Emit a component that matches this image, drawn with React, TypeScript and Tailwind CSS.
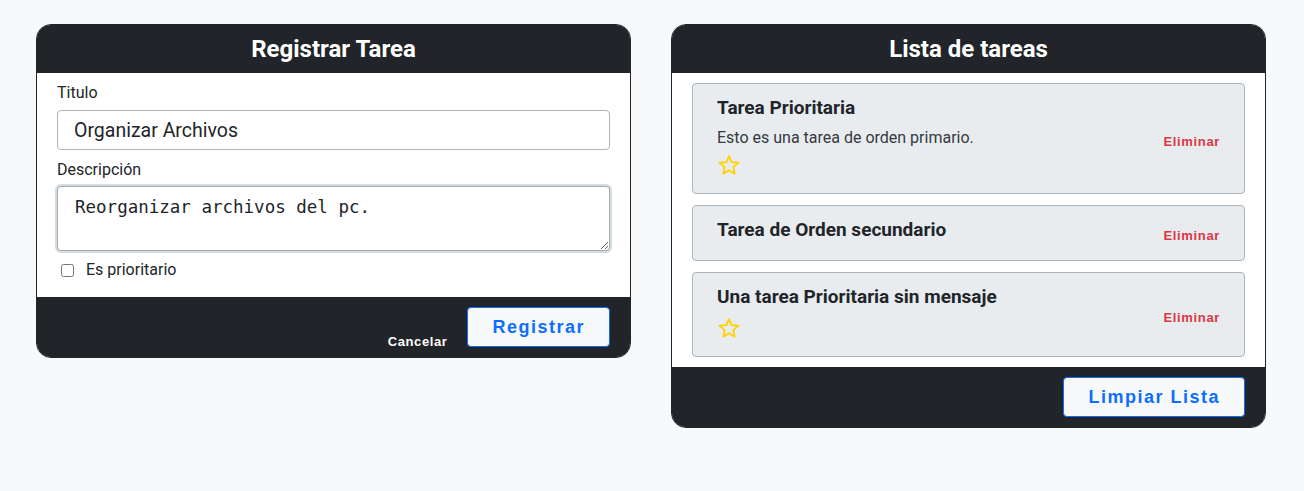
import { useState } from 'react'

type Task = {
  id: number
  title: string
  description?: string
  priority: boolean
}

const initialTasks: Task[] = [
  { id: 1, title: 'Tarea Prioritaria', description: 'Esto es una tarea de orden primario.', priority: true },
  { id: 2, title: 'Tarea de Orden secundario', priority: false },
  { id: 3, title: 'Una tarea Prioritaria sin mensaje', priority: true },
]

function StarIcon() {
  return (
    <svg width="22" height="20" viewBox="0 0 24 22" fill="none" className="block">
      <polygon
        points="12,1.3 14.9,7.9 22.3,8.5 16.7,13.3 18.3,20.5 12,16.7 5.7,20.5 7.3,13.3 1.7,8.5 9.1,7.9"
        stroke="#ffd100"
        strokeWidth="2"
        strokeLinejoin="round"
      />
    </svg>
  )
}

export default function App() {
  const [title, setTitle] = useState('Organizar Archivos')
  const [description, setDescription] = useState('Reorganizar archivos del pc.')
  const [priority, setPriority] = useState(false)
  const [tasks, setTasks] = useState<Task[]>(initialTasks)

  return (
    <div className="min-h-screen bg-[#f8f9fa] font-['Roboto','Liberation_Sans',sans-serif] text-[#212529]">
      <div className="flex items-start gap-[40px] pl-[36px] pt-[24px]">
        {/* Registrar Tarea */}
        <div className="w-[595px] overflow-hidden rounded-[15px] border border-[#212529] bg-white">
          <div className="flex h-[48px] items-center justify-center bg-[#212529]">
            <h2 className="text-[24px] font-bold text-white">Registrar Tarea</h2>
          </div>
          <div className="px-5 pt-2 pb-[15px]">
            <label className="block text-[16px] leading-6">Titulo</label>
            <input
              value={title}
              onChange={(e) => setTitle(e.target.value)}
              className="mt-[5px] block h-[40px] w-full rounded-[4px] border border-[#adb5bd] bg-white px-4 text-[19.5px] text-[#212529] outline-none"
            />
            <label className="mt-[8px] block text-[16px] leading-6">Descripción</label>
            <textarea
              value={description}
              onChange={(e) => setDescription(e.target.value)}
              spellCheck={false}
              className="mt-[4px] block h-[65px] w-full rounded-[4px] border border-[#a3abb3] bg-white px-[17px] py-[7px] font-['DejaVu_Sans_Mono',monospace] text-[17.5px] leading-[26px] text-[#212529] shadow-[0_0_0_2px_#d6dbe0] outline-none"
            />
            <label className="mt-[7px] flex h-6 items-center gap-3 pl-1 text-[16px]">
              <input
                type="checkbox"
                checked={priority}
                onChange={(e) => setPriority(e.target.checked)}
                className="h-[13px] w-[13px]"
              />
              Es prioritario
            </label>
          </div>
          <div className="flex justify-end gap-5 bg-[#212529] px-5 py-[10px]">
            <button className="-mb-[2px] self-end font-['Liberation_Sans',sans-serif] text-[13px] font-bold leading-[14px] tracking-[0.6px] text-white">
              Cancelar
            </button>
            <button className="h-10 rounded-[4px] border border-[#0d6efd] bg-[#f8f9fa] px-6 font-['Liberation_Sans',sans-serif] text-[18px] font-bold tracking-[1.5px] text-[#0d6efd]">
              Registrar
            </button>
          </div>
        </div>

        {/* Lista de tareas */}
        <div className="w-[595px] overflow-hidden rounded-[15px] border border-[#212529] bg-white">
          <div className="flex h-[48px] items-center justify-center bg-[#212529]">
            <h2 className="text-[24px] font-bold text-white">Lista de tareas</h2>
          </div>
          <div className="flex flex-col gap-[11px] px-5 py-[10px]">
            {tasks.map((task) => (
              <div
                key={task.id}
                className="flex items-center justify-between rounded-[4px] border border-[#adb5bd] bg-[#e9ecef] pt-[12px] pb-[18px] pl-6 pr-6"
              >
                <div>
                  <h3 className="text-[19px] font-bold leading-6">{task.title}</h3>
                  {task.description && (
                    <p className="mt-[6px] text-[16px] leading-6 text-[#343a40]">{task.description}</p>
                  )}
                  {task.priority && (
                    <div className={task.description ? 'mt-[5px] pl-[1px]' : 'mt-[9px] pl-[1px]'}>
                      <StarIcon />
                    </div>
                  )}
                </div>
                <button
                  onClick={() => setTasks(tasks.filter((t) => t.id !== task.id))}
                  className="mt-[4px] translate-y-[4px] font-['Liberation_Sans',sans-serif] text-[13px] font-bold leading-4 tracking-[0.65px] text-[#dc3545]"
                >
                  Eliminar
                </button>
              </div>
            ))}
          </div>
          <div className="flex justify-end bg-[#212529] px-5 py-[10px]">
            <button
              onClick={() => setTasks([])}
              className="h-10 rounded-[4px] border border-[#0d6efd] bg-[#f8f9fa] px-6 font-['Liberation_Sans',sans-serif] text-[18px] font-bold tracking-[1.5px] text-[#0d6efd]"
            >
              Limpiar Lista
            </button>
          </div>
        </div>
      </div>
    </div>
  )
}
